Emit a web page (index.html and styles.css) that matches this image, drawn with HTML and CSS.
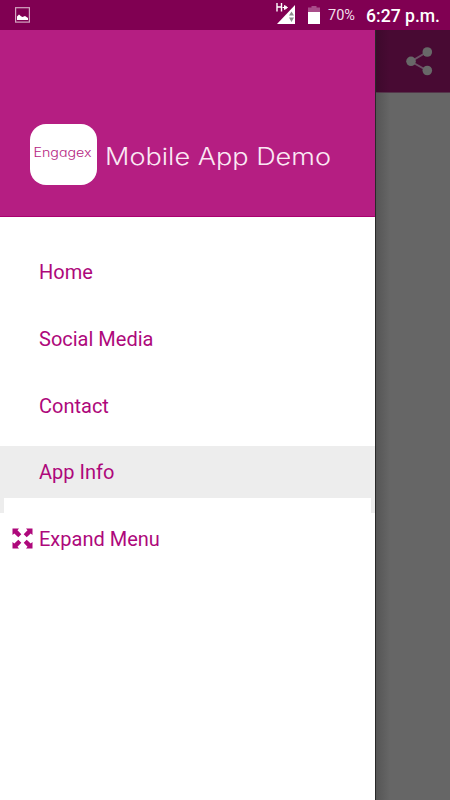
FILE: index.html
```html
<!DOCTYPE html>
<html lang="en">
<head>
<meta charset="utf-8">
<title>Mobile App Demo</title>
<link rel="stylesheet" href="styles.css">
</head>
<body>
<div class="screen">
  <header class="status">
    <svg class="status-picture" width="15" height="16" viewBox="0 0 15 16"><rect x=".6" y=".7" width="13.8" height="14.4" fill="none" stroke="#d3a6c0" stroke-width="1.2"/><path d="M2 13V9.500L4 7.500 6 9.300 7.500 10 10 9 13 11V13Z" fill="#fff"/></svg>
    <svg class="status-signal" width="20" height="24" viewBox="0 0 20 24"><path d="M19 3V22H1Z" fill="#fff"/><path d="M15.500 9.500L18 13.500H13ZM15.500 20L18 15.500H13Z" fill="#8c8c8c"/><path d="M1 1V9.500M5.500 1V9.500M1 5H5.500" stroke="#fff" stroke-width="1.400" fill="none"/><path d="M7 5.500H11.500M8.500 3L11.500 5.500 8.500 8" stroke="#800052" stroke-width="2.500" fill="none"/><path d="M6.500 5.500H10M8.500 3.500L11.500 5.500 8.500 7.500Z" stroke="#fff" stroke-width="1" fill="#fff"/></svg>
    <svg class="status-battery" width="12" height="18" viewBox="0 0 12 18"><path d="M3.500 0H8.500V1.500H12V6H0V1.500H3.500Z" fill="#a94d8a"/><path d="M0 6H12V18H0Z" fill="#fff"/></svg>
    <span class="percent">70%</span>
    <span class="clock">6:27 p.m.</span>
  </header>
  <div class="content">
    <nav class="drawer">
      <div class="brand">
        <div class="logo"><svg width="66" height="61" viewBox="0 0 66 61"><text class="logo-text" x="3.500" y="33" textLength="58" lengthAdjust="spacingAndGlyphs">Engagex</text></svg></div>
        <svg class="title" width="236" height="40" viewBox="0 0 236 40"><text class="title-text" x="-1" y="25" textLength="226" lengthAdjust="spacingAndGlyphs">Mobile App Demo</text></svg>
      </div>
      <ul class="menu">
        <li class="item"><span>Home</span></li>
        <li class="item"><span>Social Media</span></li>
        <li class="item"><span>Contact</span></li>
        <li class="item selected"><span>App Info</span></li>
      </ul>
      <div class="expand">
        <svg width="21" height="21" viewBox="0 0 21 21" fill="#ae087b"><defs><path id="arrow" d="M.5 .5H7L5.500 2.300 9.300 6.300 6.300 9.300 2.300 5.500 .5 7Z"/></defs><use href="#arrow"/><use href="#arrow" transform="translate(21) scale(-1 1)"/><use href="#arrow" transform="translate(0 21) scale(1 -1)"/><use href="#arrow" transform="translate(21 21) scale(-1 -1)"/></svg>
        <span>Expand Menu</span>
      </div>
    </nav>
    <div class="page">
      <div class="toolbar"><svg width="28" height="30" viewBox="0 0 28 30"><path d="M22 6L6 15.500 22 24.500" fill="none" stroke="#6c5065" stroke-width="2"/><g fill="#686868"><circle cx="22.300" cy="6" r="4.800"/><circle cx="6" cy="15.300" r="4.800"/><circle cx="22.300" cy="24.500" r="4.800"/></g></svg></div>
    </div>
  </div>
</div>
</body>
</html>
```
FILE: styles.css
```css
* { box-sizing: border-box; }
body { margin: 0; font-family: Roboto, sans-serif; }
.screen { width: 450px; height: 800px; overflow: hidden; display: flex; flex-direction: column; }
svg { display: block; flex: none; }
.status { height: 30px; background: #800052; color: #fff; display: flex; align-items: flex-start; white-space: nowrap; }
.status-picture { margin: 7px 0 0 15px; }
.status-signal { margin: 2px 0 0 246px; }
.status-battery { margin: 6px 0 0 12px; }
.percent { margin-left: 8px; width: 38px; font-size: 14.5px; line-height: 32px; color: #f2dfeb; }
.clock { font-size: 17.6px; font-weight: 500; line-height: 32px; }
.content { flex: 1; display: flex; }
.drawer { width: 375px; background: #fff; color: #ae087b; font-size: 20px; }
.brand { height: 187px; background: #b51e82; border-bottom: 1px solid #a9006f; display: flex; align-items: flex-start; padding: 94px 0 0 30px; }
.logo { width: 67px; height: 61px; border-radius: 16px; background: #fff; }
.logo-text { font: 300 12.5px Inter, sans-serif; font-feature-settings: "cv11"; fill: #b51e82; }
.title { margin: 16px 0 0 9px; }
.title-text { font: 300 23.5px Inter, sans-serif; fill: #fbe8f4; }
.menu { list-style: none; margin: 0; padding: 28px 0 0; }
.item { height: 67px; padding-left: 39px; line-height: 54px; }
.selected { background: #ededed; line-height: 53px; }
.expand { position: relative; margin: -15px 4px 0; height: 82px; padding: 15px 0 0 8px; background: #fff; display: flex; gap: 6px; line-height: 53px; }
.expand svg { margin-top: 15px; }
.page { flex: 1; background: linear-gradient(90deg, #555, #666 14px); border-left: 1px solid #292929; }
.toolbar { height: 63px; background: linear-gradient(90deg, #3e092c, #480a33 14px); border-bottom: 1px solid #54354a; padding: 16px 0 0 29px; }
```
